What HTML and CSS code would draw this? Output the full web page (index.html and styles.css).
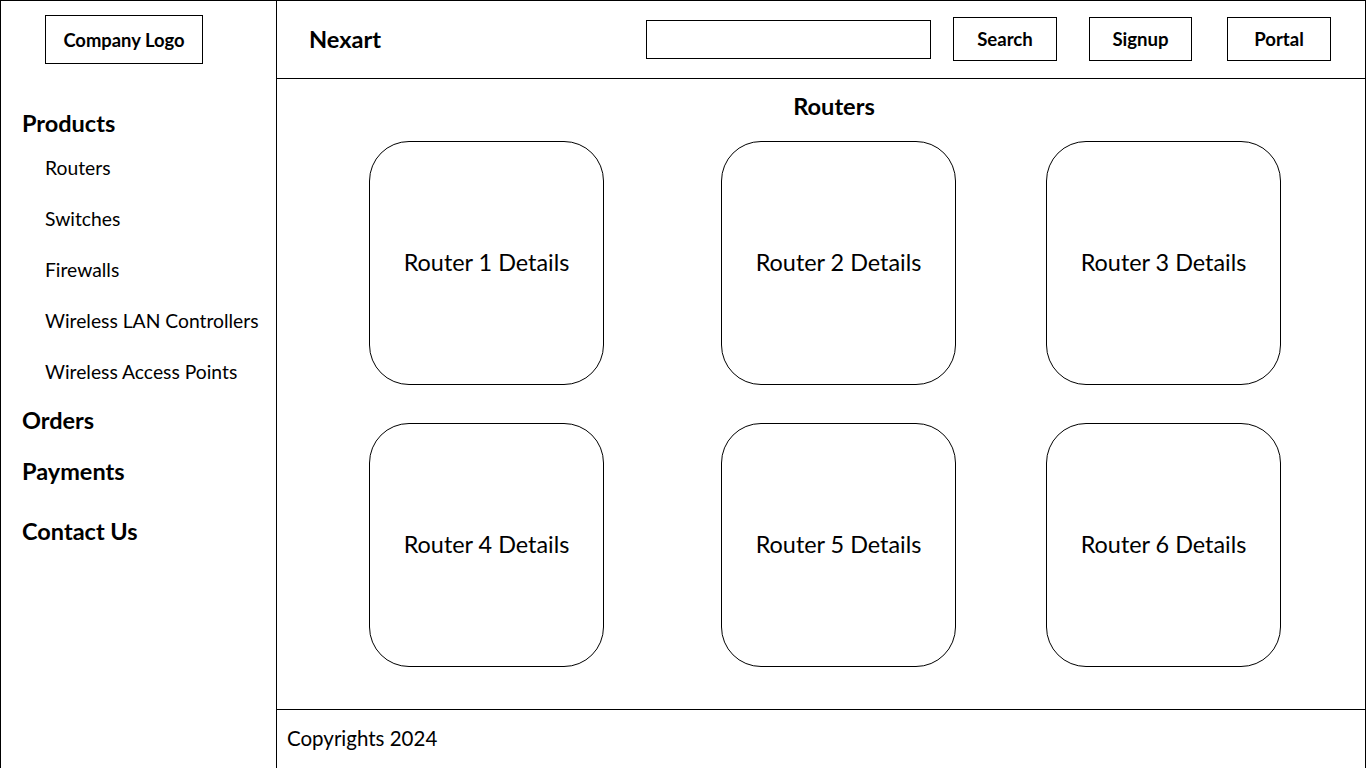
FILE: index.html
```html
<!DOCTYPE html>
<html lang="en">

<head>
  <meta charset="UTF-8">
  <meta name="viewport" content="width=device-width, initial-scale=1.0">
  <title>Nexart - Routers</title>
  <link rel="stylesheet" href="styles.css">
</head>

<body>
  <div class="page">
    <aside class="sidebar">
      <div class="logo">Company Logo</div>

      <nav class="nav">
        <div class="nav-title">Products</div>
        <ul class="sub-list">
          <li>Routers</li>
          <li>Switches</li>
          <li>Firewalls</li>
          <li>Wireless LAN Controllers</li>
          <li>Wireless Access Points</li>
        </ul>
        <div class="nav-title orders">Orders</div>
        <div class="nav-title payments">Payments</div>
        <div class="nav-title contact">Contact Us</div>
      </nav>
    </aside>

    <div class="content">
      <header class="header">
        <div class="brand">Nexart</div>
        <input class="search-box" type="text">
        <button class="btn btn-search">Search</button>
        <button class="btn btn-signup">Signup</button>
        <button class="btn btn-portal">Portal</button>
      </header>

      <main class="main">
        <h1 class="main-title">Routers</h1>

        <div class="card-grid">
          <div class="card">Router 1 Details</div>
          <div class="card">Router 2 Details</div>
          <div class="card">Router 3 Details</div>
          <div class="card">Router 4 Details</div>
          <div class="card">Router 5 Details</div>
          <div class="card">Router 6 Details</div>
        </div>
      </main>

      <footer class="footer">Copyrights 2024</footer>
    </div>
  </div>
</body>

</html>
```

FILE: styles.css
```css
* {
  box-sizing: border-box;
}

body {
  font-family: Lato, "Open Sans", sans-serif;
  color: #000;
  background-color: #fff;
  margin: 0;
  padding: 0;
}

.page {
  display: flex;
  height: 100vh;
  overflow: hidden;
}

/* left column */
.sidebar {
  width: 277px;
  flex-shrink: 0;
  border-left: 1px solid #000;
  border-top: 1px solid #000;
  border-right: 1px solid #000;
  padding-top: 14px;
}

.logo {
  width: 158px;
  height: 49px;
  margin-left: 44px;
  border: 1px solid #000;
  display: flex;
  align-items: center;
  justify-content: center;
  font-weight: bold;
  font-size: 18.4px;
}

.nav {
  padding-left: 21px;
}

.nav-title {
  font-size: 23.5px;
  font-weight: bold;
  line-height: 30px;
  margin-top: 44px;
}

.sub-list {
  list-style: none;
  margin: 4px 0 0;
  padding: 0 0 0 23px;
}

.sub-list li {
  font-size: 19.3px;
  line-height: 51px;
  height: 51px;
}

.nav-title.orders {
  margin-top: 8px;
}

.nav-title.payments {
  margin-top: 21px;
}

.nav-title.contact {
  margin-top: 30px;
}

/* right column */
.content {
  flex: 1;
  display: flex;
  flex-direction: column;
  border-right: 1px solid #000;
}

.header {
  height: 79px;
  display: flex;
  align-items: center;
  border-top: 1px solid #000;
  border-bottom: 1px solid #000;
  padding: 0 34px 0 32px;
}

.brand {
  font-size: 23.6px;
  font-weight: bold;
  margin-bottom: 2px;
}

.search-box {
  width: 285px;
  height: 39px;
  margin-left: auto;
  border: 1px solid #000;
  border-radius: 0;
  padding: 0 8px;
  font-family: inherit;
}

.btn {
  height: 44px;
  margin-bottom: 2px;
  background-color: #fff;
  border: 1px solid #000;
  border-radius: 0;
  font-family: inherit;
  font-size: 18.6px;
  font-weight: bold;
  color: #000;
  padding: 0;
  cursor: pointer;
}

.btn-search {
  width: 104px;
  margin-left: 22px;
}

.btn-signup {
  width: 103px;
  margin-left: 32px;
}

.btn-portal {
  width: 104px;
  margin-left: 35px;
}

.main {
  flex: 1;
  padding-top: 14px;
}

.main-title {
  margin: 0;
  font-size: 23.6px;
  line-height: 26px;
  text-align: center;
  padding-left: 26px;
}

.card-grid {
  display: grid;
  grid-template-columns: 352px 325px 235px;
  row-gap: 38px;
  margin-top: 22px;
  padding-left: 92px;
}

.card {
  width: 235px;
  height: 244px;
  border: 1px solid #000;
  border-radius: 40px;
  display: flex;
  align-items: center;
  justify-content: center;
  font-size: 23.4px;
  padding-bottom: 2px;
}

.footer {
  height: 59px;
  border-top: 1px solid #000;
  display: flex;
  align-items: center;
  padding: 0 0 3px 10px;
  font-size: 20.5px;
}
```
